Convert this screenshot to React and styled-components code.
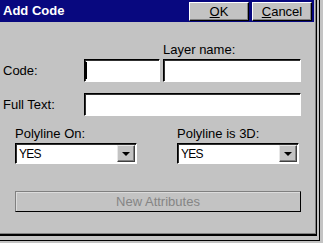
import React from "react";
import styled, { createGlobalStyle } from "styled-components";

const GlobalStyle = createGlobalStyle`
  html, body {
    margin: 0;
    padding: 0;
    background: #c3c3c3;
    font-family: "Liberation Sans", Arial, sans-serif;
    font-size: 13px;
  }
`;

const OuterFrame = styled.div`
  display: inline-block;
  border-right: 1px solid #000;
  border-bottom: 1px solid #000;
  padding-right: 2px;
  padding-bottom: 4px;
`;

const InnerFrame = styled.div`
  border-right: 1px solid #000;
  border-bottom: 2px solid #000;
`;

const Window = styled.div`
  width: 315px;
  height: 233px;
  background: #c3c3c3;
  border-right: 1px solid #808080;
  border-bottom: 1px solid #808080;
  display: flex;
  flex-direction: column;
`;

const TitleBar = styled.div`
  height: 22px;
  margin-right: 1px;
  background: #08087f;
  display: flex;
  align-items: flex-end;
  padding: 0 2px 1px 3px;
  box-sizing: border-box;
`;

const Title = styled.div`
  flex: 1;
  color: #fff;
  font-weight: bold;
  font-size: 13px;
  line-height: 20px;
  align-self: center;
`;

const TitleButtons = styled.div`
  display: flex;
  gap: 3px;
`;

const TitleButton = styled.div`
  width: 60px;
  height: 19px;
  box-sizing: border-box;
  background: #c3c3c3;
  border: 1px solid;
  border-color: #fff #000 #000 #fff;
  box-shadow: inset -1px -1px 0 #808080;
  display: flex;
  align-items: center;
  justify-content: center;
  color: #000;
  font-size: 13px;
  u {
    text-decoration: underline;
  }
`;

const Body = styled.div`
  display: flex;
  flex-direction: column;
  padding: 20px 14px 0 3px;
`;

const Row = styled.div`
  display: flex;
  align-items: center;
  margin-top: ${(p) => p.$gap || 0}px;
  padding-left: ${(p) => p.$indent || 0}px;
`;

const Label = styled.div`
  width: ${(p) => p.$width || "auto"};
  line-height: 15px;
  color: #000;
  white-space: nowrap;
`;

const TextBox = styled.div`
  width: ${(p) => p.$width}px;
  height: 23px;
  box-sizing: border-box;
  background: #fff;
  border: 1px solid;
  border-color: #000 #fff #fff #000;
  box-shadow: inset 1px 1px 0 #303030;
  margin-left: ${(p) => p.$ml || 0}px;
  display: flex;
  align-items: center;
`;

const Caret = styled.span`
  width: 2px;
  height: 17px;
  background: #000;
`;

const Column = styled.div`
  width: ${(p) => p.$width}px;
  display: flex;
  flex-direction: column;
  gap: 2px;
`;

const Combo = styled.div`
  width: 122px;
  height: 21px;
  box-sizing: border-box;
  background: #fff;
  border: 1px solid;
  border-color: #000 #fff #fff #000;
  box-shadow: inset 1px 1px 0 #303030;
  display: flex;
  align-items: center;
  padding: 0 1px 0 3px;
`;

const ComboText = styled.span`
  flex: 1;
  font-size: 12px;
  letter-spacing: -0.8px;
  color: #000;
`;

const ArrowButton = styled.div`
  width: 18px;
  height: 17px;
  box-sizing: border-box;
  background: #c3c3c3;
  border: 1px solid;
  border-color: #e8e8e8 #404040 #404040 #e8e8e8;
  box-shadow: inset -1px -1px 0 #808080;
  display: flex;
  align-items: center;
  justify-content: center;
`;

const Arrow = styled.span`
  width: 0;
  height: 0;
  border-left: 4px solid transparent;
  border-right: 4px solid transparent;
  border-top: 4px solid #000;
  margin-top: 1px;
`;

const WideButton = styled.div`
  width: 286px;
  height: 21px;
  box-sizing: border-box;
  margin-left: 12px;
  border: 1px solid;
  border-color: #808080 #000 #000 #808080;
  box-shadow: inset 1px 1px 0 #dcdcdc;
  display: flex;
  align-items: center;
  justify-content: center;
  color: #858585;
`;

const ComboField = ({ value }) => (
  <Combo>
    <ComboText>{value}</ComboText>
    <ArrowButton>
      <Arrow />
    </ArrowButton>
  </Combo>
);

export default function App() {
  return (
    <>
      <GlobalStyle />
      <OuterFrame>
        <InnerFrame>
          <Window>
            <TitleBar>
              <Title>Add Code</Title>
              <TitleButtons>
                <TitleButton>
                  <u>O</u>K
                </TitleButton>
                <TitleButton>
                  <u>C</u>ancel
                </TitleButton>
              </TitleButtons>
            </TitleBar>
            <Body>
              <Row $indent={160}>
                <Label>Layer name:</Label>
              </Row>
              <Row $gap={2}>
                <Label $width="81px">Code:</Label>
                <TextBox $width={76}>
                  <Caret />
                </TextBox>
                <TextBox $width={138} $ml={3} />
              </Row>
              <Row $gap={11}>
                <Label $width="81px">Full Text:</Label>
                <TextBox $width={217} />
              </Row>
              <Row $gap={10} $indent={12}>
                <Column $width={162}>
                  <Label>Polyline On:</Label>
                  <ComboField value="YES" />
                </Column>
                <Column $width={122}>
                  <Label>Polyline is 3D:</Label>
                  <ComboField value="YES" />
                </Column>
              </Row>
              <Row $gap={27}>
                <WideButton>New Attributes</WideButton>
              </Row>
            </Body>
          </Window>
        </InnerFrame>
      </OuterFrame>
    </>
  );
}
